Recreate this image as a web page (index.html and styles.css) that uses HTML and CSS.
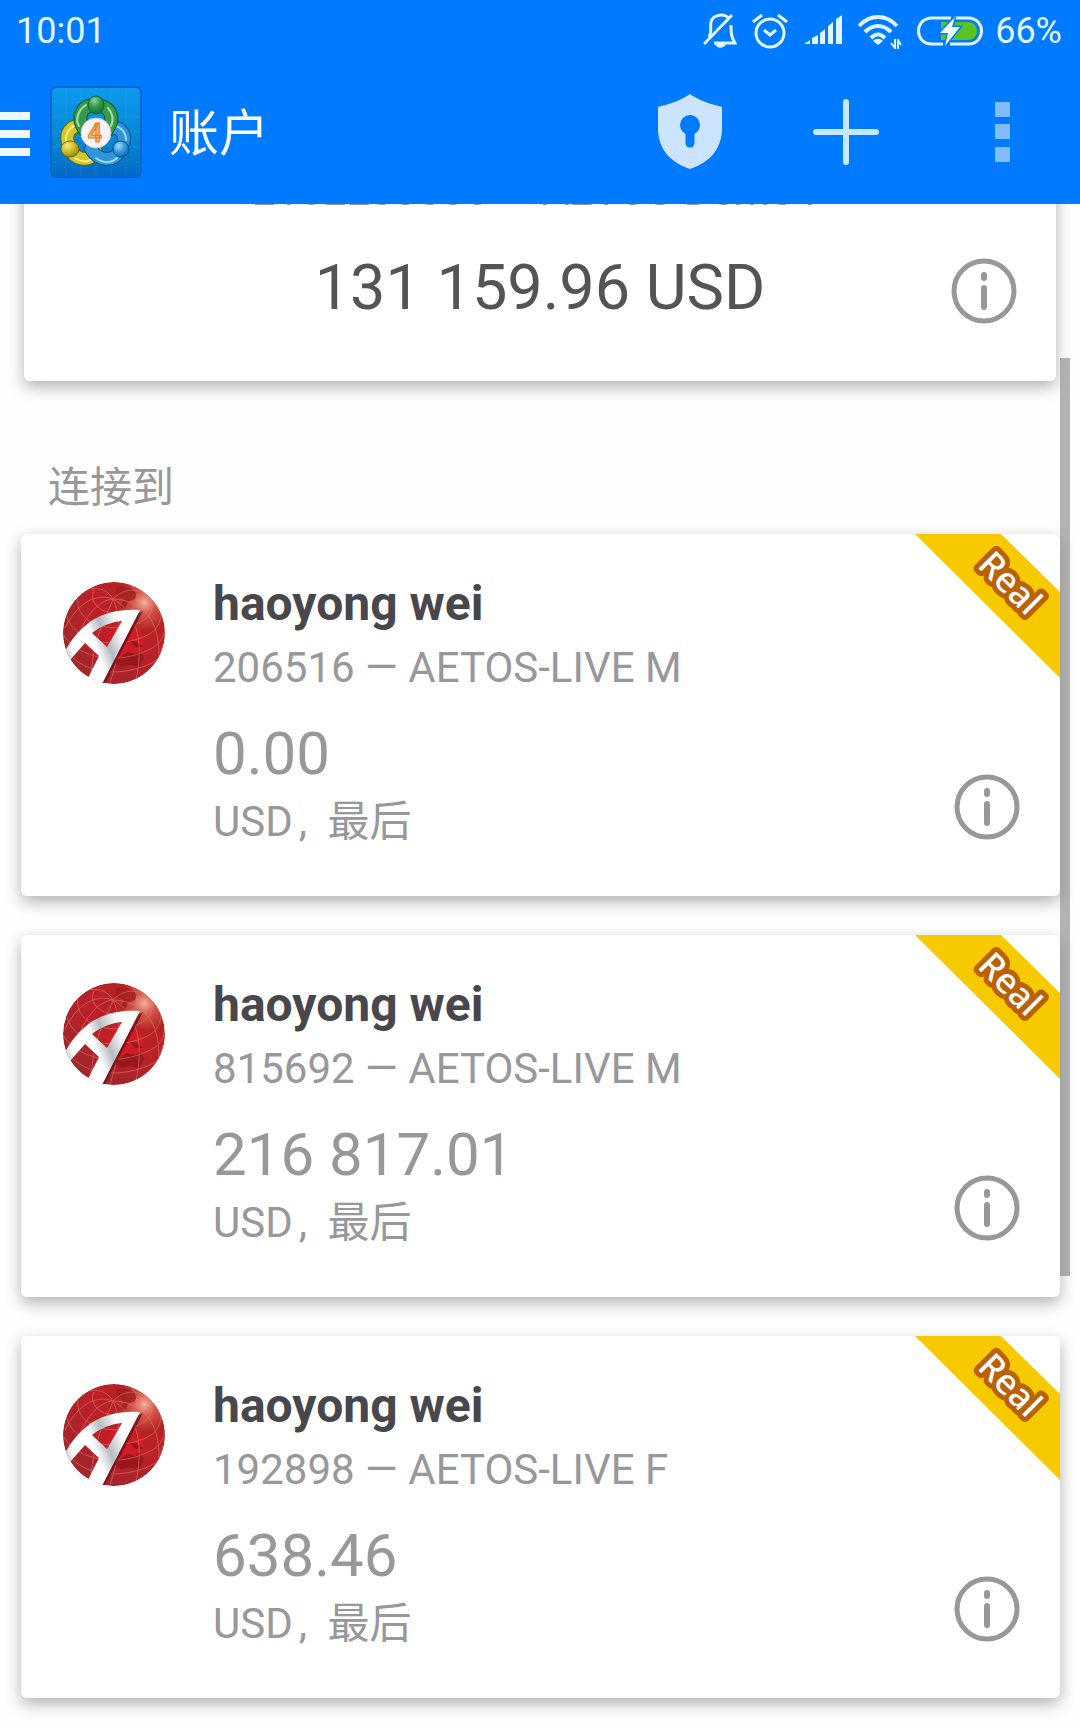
FILE: index.html
```html
<!DOCTYPE html>
<html lang="zh-CN">
	<head>
		<meta charset="UTF-8" />
		<meta name="viewport" content="width=device-width, initial-scale=1.0" />
		<title>账户</title>

		<link rel="stylesheet" href="styles.css">
	</head>

	<body>
		<!-- shared icons -->
		<svg class="sprite" aria-hidden="true">
			<defs>
				<radialGradient id="globe" cx="0.8" cy="0.2" r="0.85">
					<stop offset="0" stop-color="#f3b0a0" />
					<stop offset="0.13" stop-color="#d4574a" />
					<stop offset="0.32" stop-color="#b52325" />
					<stop offset="0.6" stop-color="#bd2028" />
					<stop offset="1" stop-color="#a3262b" />
				</radialGradient>
				<linearGradient id="steel" x1="0" y1="0.7" x2="1" y2="0.3">
					<stop offset="0" stop-color="#a3a8ad" />
					<stop offset="0.15" stop-color="#ffffff" />
					<stop offset="0.42" stop-color="#ffffff" />
					<stop offset="0.58" stop-color="#b4bcc2" />
					<stop offset="0.8" stop-color="#ffffff" />
				</linearGradient>
				<clipPath id="globe-clip"><circle cx="51" cy="51" r="51" /></clipPath>
			</defs>
			<symbol id="aetos" viewBox="0 0 102 102">
				<g clip-path="url(#globe-clip)">
					<circle cx="51" cy="51" r="51" fill="url(#globe)" />
					<ellipse cx="62" cy="60" rx="19" ry="20" fill="#ec1822" opacity="0.4" />
					<path d="M53 5c7-2 18 1 21 6l-2 6-7 3-3 7-5-2 4-7-8-6z" fill="#9c1a1d" opacity="0.7" />
					<path d="M56 76l8-6 8 2 5-4 4 8-5 9-9-2-9 2-6-4zM66 58l8 2 7 5-9 0z" fill="#8c1519" opacity="0.75" />
					<g fill="none" stroke="#e08a79" stroke-width="1" opacity="0.5">
						<path d="M50 17C30 10 13 24 2 46" />
						<path d="M50 17C36 18 18 34 8 77" />
						<path d="M50 17C46 30 30 52 28 96" />
						<path d="M50 17C58 33 59 66 47 101" />
						<path d="M50 17C72 29 82 56 73 98" />
						<path d="M50 17C80 18 97 38 96 76" />
						<path d="M50 17C45 9 38 5 27 7" />
						<path d="M50 17C60 6 75 6 84 13" />
						<path d="M31 8C25 20 38 33 57 31S79 15 68 3" />
						<path d="M15 16C12 36 35 49 61 45S93 28 87 14" />
						<path d="M4 34C10 57 40 65 67 59S97 43 98 31" />
						<path d="M0 52C13 74 46 81 72 73S99 58 102 47" />
						<path d="M6 72C22 90 50 94 76 86S96 72 100 62" />
					</g>
					<path d="M80 29L42 101l-4 0 33-67z" fill="#5d0c10" opacity="0.7" />
					<path fill-rule="evenodd" fill="url(#steel)" d="M2 69C8 58 16 48 28 39C43 30 57 27 77 28L38 104L24 98L36 74L22 61L7 78ZM29 51L44 65L59 39C48 40 38 44 29 51Z" />
				</g>
			</symbol>
			<symbol id="info" viewBox="0 0 66 66">
				<circle cx="33" cy="33" r="30" fill="none" stroke="currentColor" stroke-width="5" />
				<path d="M33 17v3M33 30v19" fill="none" stroke="currentColor" stroke-width="6" stroke-linecap="round" />
			</symbol>
			<symbol id="real" viewBox="0 0 145 144">
				<path d="M0 0H86L145 58V144Z" fill="#f7ca00" />
				<text class="ribbon-text" x="95" y="61" text-anchor="middle" transform="rotate(45 95 49)">Real</text>
			</symbol>
		</svg>

		<header class="header">
			<div class="status-bar">
				<span class="time">10:01</span>
				<div class="status-icons">
					<!-- muted bell -->
					<svg width="34" height="36" viewBox="0 0 34 36" fill="none" stroke="currentColor" stroke-width="3">
						<path d="M6 24c3-4 1-11 2-15 2-8 14-9 18-3M28 12c0 7 0 12 4 18H11" />
						<path d="M1 31L29 2" />
						<path d="M12 31h11c-2 5-9 5-11 0z" fill="currentColor" stroke="none" />
					</svg>
					<!-- alarm -->
					<svg width="36" height="36" viewBox="0 0 36 36" fill="none" stroke="currentColor" stroke-width="3">
						<circle cx="18" cy="20" r="14" />
						<path d="M12 17l6 5 6-5M1 9l9-7M35 9l-9-7" />
					</svg>
					<!-- signal -->
					<svg width="40" height="36" viewBox="0 0 40 36" fill="currentColor">
						<path d="M1 31l6-4v4zM9 25l6-3v9H9zM17 20l5-4v15h-5zM25 13l5-4v22h-5zM33 6l6-4v29h-6z" />
					</svg>
					<!-- wifi -->
					<svg width="44" height="36" viewBox="0 0 44 36" fill="none" stroke="currentColor" stroke-width="4">
						<path d="M1 13c11-12 27-12 38 0M7 19c8-8 18-8 26 0M13 25c5-5 9-5 14 0" />
						<path d="M15 28c3-3 7-3 10 0l-5 4z" fill="currentColor" stroke="none" />
						<path d="M37 26v10M40 26v10M37 35l-4-5M40 27l3 5" stroke-width="2" />
					</svg>
					<!-- battery, charging -->
					<svg width="66" height="36" viewBox="0 0 66 36">
						<path d="M24 9h27c12 0 12 18 0 18H24z" fill="#58c322" />
						<path d="M34 5H15C-3 5-3 31 15 31h11M38 5h13c18 0 18 26 0 26H33" fill="none" stroke="currentColor" stroke-width="3" />
						<path class="bolt" d="M38 4L23 20h8L28 33 43 14H35z" />
					</svg>
				</div>
				<span class="battery">66%</span>
			</div>

			<div class="app-bar">
				<button class="menu" aria-label="菜单">
					<svg width="30" height="44" viewBox="0 0 30 44" fill="#ecfaff">
						<path d="M0 0h30v8H0zM0 18h30v8H0zM0 36h30v8H0z" />
					</svg>
				</button>
				<svg class="logo" viewBox="0 0 92 92">
					<defs>
						<linearGradient id="tile" x1="0" y1="0" x2="0" y2="1">
							<stop offset="0" stop-color="#0c9af0" />
							<stop offset="0.55" stop-color="#0788d2" />
							<stop offset="1" stop-color="#0468c4" />
						</linearGradient>
						<radialGradient id="green" cx="0.4" cy="0.25" r="0.8">
							<stop offset="0" stop-color="#8ed19a" />
							<stop offset="0.5" stop-color="#2c9850" />
							<stop offset="1" stop-color="#146c2a" />
						</radialGradient>
						<radialGradient id="yellow" cx="0.35" cy="0.3" r="0.8">
							<stop offset="0" stop-color="#f7ef80" />
							<stop offset="0.5" stop-color="#cabc22" />
							<stop offset="1" stop-color="#857c0c" />
						</radialGradient>
						<radialGradient id="blue" cx="0.35" cy="0.3" r="0.8">
							<stop offset="0" stop-color="#a4ddfa" />
							<stop offset="0.5" stop-color="#3399dc" />
							<stop offset="1" stop-color="#0b5ca8" />
						</radialGradient>
					</defs>
					<rect x="1" y="1" width="90" height="90" rx="5" fill="url(#tile)" stroke="#0764cf" stroke-width="2" />
					<path d="M16 2v88M31 2v88M46 2v88M61 2v88M76 2v88M2 16h88M2 31h88M2 46h88M2 61h88M2 76h88" stroke="#35b2e8" stroke-width="1" opacity="0.2" />
					<g fill="none" stroke-linecap="round">
						<path d="M20 61C11 45 26 35 37 42M20 62C24 74 39 77 46 66" stroke="#62620c" stroke-width="14" />
						<path d="M20 61C11 45 26 35 37 42M20 62C24 74 39 77 46 66" stroke="#d3c72c" stroke-width="12" />
						<path d="M16 55C15 45 23 38 32 38M25 72c7 5 14 4 18 0" stroke="#f6ee85" stroke-width="2" />
						<path d="M71 62C79 47 68 39 60 43M71 62C65 78 48 75 41 63" stroke="#0a4f91" stroke-width="14" />
						<path d="M71 62C79 47 68 39 60 43M71 62C65 78 48 75 41 63" stroke="#3096da" stroke-width="12" />
						<path d="M76 54c0-8-5-13-12-14M46 72c8 6 16 5 21 0" stroke="#a0daf8" stroke-width="2" />
						<path d="M45 19C32 19 26 31 34 43M47 19C62 21 65 33 57 44" stroke="#105425" stroke-width="14" />
						<path d="M45 19C32 19 26 31 34 43M47 19C62 21 65 33 57 44" stroke="#369b4f" stroke-width="12" />
						<path d="M36 19C28 24 25 34 29 40M58 22c5 6 6 12 3 18" stroke="#acdc9b" stroke-width="2" />
					</g>
					<ellipse cx="46" cy="19" rx="8" ry="9" fill="url(#green)" stroke="#17632c" />
					<ellipse cx="20" cy="63" rx="9" ry="8" fill="url(#yellow)" stroke="#6e6a0e" />
					<ellipse cx="71" cy="63" rx="8" ry="8" fill="url(#blue)" stroke="#09529a" />
					<circle cx="46" cy="47" r="15" fill="#f6f4f6" stroke="#c7cbd6" />
					<text class="logo-digit" x="45" y="56" text-anchor="middle">4</text>
				</svg>
				<h1>账户</h1>

				<nav class="actions">
					<button aria-label="安全">
						<svg width="66" height="78" viewBox="0 0 66 78">
							<path d="M33 1C43 8 54 11 65 14V37C64 58 51 70 33 76C15 70 2 58 1 37V14C12 11 23 8 33 1Z" fill="#cce4ff" />
							<circle cx="33" cy="32" r="10" fill="#007aff" />
							<path d="M33 32v18" stroke="#007aff" stroke-width="9" stroke-linecap="round" />
						</svg>
					</button>
					<button aria-label="添加">
						<svg width="66" height="66" viewBox="0 0 66 66">
							<path d="M33 3v60M3 33h60" stroke="#c5e8ff" stroke-width="6" stroke-linecap="round" />
						</svg>
					</button>
					<button aria-label="更多">
						<svg width="15" height="60" viewBox="0 0 15 60" fill="#80bdff">
							<path d="M0 0h15v15H0zM0 22h15v15H0zM0 45h15v15H0z" />
						</svg>
					</button>
				</nav>
			</div>
		</header>
		<!-- /.header -->

		<main>
			<section class="card current">
				<div class="current-text">
					<p class="server">2102283586 — AETOS-Demo F</p>
					<p class="total">131 159.96 USD</p>
				</div>
				<button class="info" aria-label="账户信息"><svg><use href="#info" /></svg></button>
			</section>

			<h2>连接到</h2>

			<ul class="accounts">
				<li class="card account">
					<svg class="avatar"><use href="#aetos" /></svg>
					<div class="details">
						<h3>haoyong wei</h3>
						<p class="server">206516 — AETOS-LIVE M</p>
						<p class="balance">0.00</p>
						<p class="currency">USD<span class="comma">,</span> 最后</p>
					</div>
					<button class="info" aria-label="账户信息"><svg><use href="#info" /></svg></button>
					<svg class="ribbon"><use href="#real" /></svg>
				</li>
				<li class="card account">
					<svg class="avatar"><use href="#aetos" /></svg>
					<div class="details">
						<h3>haoyong wei</h3>
						<p class="server">815692 — AETOS-LIVE M</p>
						<p class="balance">216 817.01</p>
						<p class="currency">USD<span class="comma">,</span> 最后</p>
					</div>
					<button class="info" aria-label="账户信息"><svg><use href="#info" /></svg></button>
					<svg class="ribbon"><use href="#real" /></svg>
				</li>
				<li class="card account">
					<svg class="avatar"><use href="#aetos" /></svg>
					<div class="details">
						<h3>haoyong wei</h3>
						<p class="server">192898 — AETOS-LIVE F</p>
						<p class="balance">638.46</p>
						<p class="currency">USD<span class="comma">,</span> 最后</p>
					</div>
					<button class="info" aria-label="账户信息"><svg><use href="#info" /></svg></button>
					<svg class="ribbon"><use href="#real" /></svg>
				</li>
			</ul>

			<div class="scroll-thumb"></div>
		</main>
	</body>
</html>
```
FILE: styles.css
```css
* {
	box-sizing: border-box;
}

body {
	background-color: #fefefe;
	color: #98979b;
	font-family: Roboto, "Noto Sans CJK SC", sans-serif;
	font-size: 42px;
	line-height: 60px;
	margin: 0;
}

h1,
h2,
h3,
p,
ul {
	margin: 0;
	padding: 0;
}

button {
	align-items: center;
	background: none;
	border: 0;
	color: inherit;
	cursor: pointer;
	display: flex;
	justify-content: center;
	padding: 0;
}

.sprite {
	height: 0;
	position: absolute;
	width: 0;
}

/* header */
.header {
	background-color: #007aff;
	color: #e0f6ff;
	position: relative;
	z-index: 2;
}

.status-bar {
	align-items: center;
	display: flex;
	font-size: 36px;
	height: 60px;
	padding: 2px 18px 0 16px;
}

.status-icons {
	display: flex;
	gap: 15px;
	margin-left: auto;
	margin-right: 12px;
}

.bolt {
	fill: #f0fbff;
	paint-order: stroke;
	stroke: #007aff;
	stroke-width: 3px;
}

.app-bar {
	align-items: center;
	display: flex;
	height: 144px;
}

.menu {
	height: 92px;
	margin-right: 20px;
	padding-top: 4px;
}

.logo {
	height: 92px;
	margin-right: 27px;
	width: 92px;
}

.logo-digit {
	fill: #f8b26c;
	font-size: 25px;
	font-weight: 700;
	stroke: #e87722;
	stroke-width: 1px;
}

h1 {
	color: #fff;
	font-size: 50px;
	font-weight: 400;
	padding-top: 4px;
}

.actions {
	display: flex;
	margin-left: auto;
}

.actions button {
	height: 144px;
	width: 156px;
}

/* cards */
main {
	overflow: hidden;
	padding-bottom: 29px;
}

.card {
	background-color: #fff;
	border-radius: 6px;
	box-shadow: 0 6px 16px rgba(0, 0, 0, 0.3);
}

.info svg {
	height: 66px;
	width: 66px;
}

/* scrolled partly under the header */
.current {
	align-items: flex-end;
	display: flex;
	margin: -91px 24px 0;
	padding: 48px 39px 57px 105px;
}

.current-text {
	flex: 1;
	text-align: center;
}

.total {
	color: #545454;
	font-size: 63px;
	line-height: 72px;
	margin-top: 31px;
}

h2 {
	font-size: 42px;
	font-weight: 400;
	margin: 77px 48px 16px;
}

.accounts {
	display: grid;
	gap: 39px;
	list-style: none;
	margin: 0 20px 0 21px;
}

.account {
	display: flex;
	gap: 48px;
	overflow: hidden;
	padding: 40px 40px 44px 42px;
	position: relative;
}

.avatar {
	height: 102px;
	margin-top: 8px;
	width: 102px;
}

.details {
	flex: 1;
}

h3 {
	color: #47474c;
	font-size: 48px;
	font-weight: 700;
	margin-bottom: 4px;
}

.balance {
	font-size: 60px;
	line-height: 72px;
	margin: 20px 0 2px;
}

.comma {
	margin: 0 10px 0 6px;
}

.account .info {
	align-self: flex-end;
	margin-bottom: 12px;
}

.ribbon {
	height: 144px;
	position: absolute;
	right: 0;
	top: 0;
	width: 145px;
}

.ribbon-text {
	fill: #fff;
	font-family: "Noto Sans", sans-serif;
	font-size: 35px;
	font-weight: 500;
	paint-order: stroke;
	stroke: #b96104;
	stroke-linejoin: round;
	stroke-width: 10px;
}

/* overlay scroll bar */
.scroll-thumb {
	background-color: rgba(128, 128, 128, 0.6);
	height: 918px;
	position: absolute;
	right: 10px;
	top: 358px;
	width: 10px;
}
```
